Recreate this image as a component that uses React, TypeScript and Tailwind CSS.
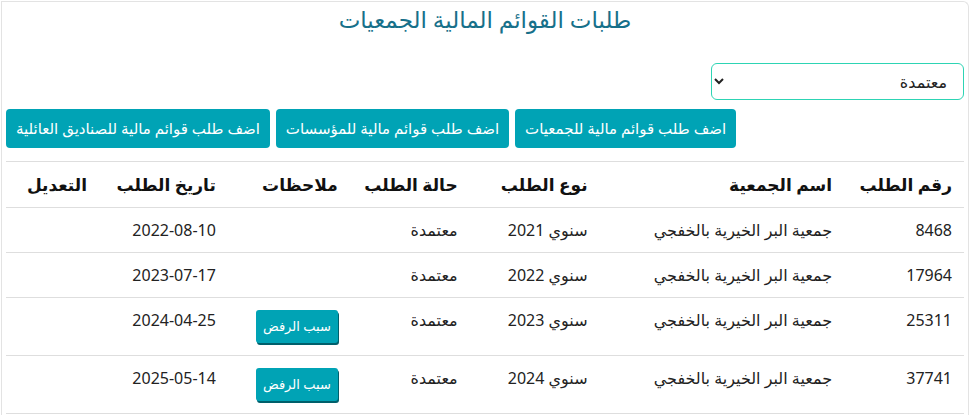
import React from 'react';

interface RequestRow {
  id: number;
  org: string;
  type: string;
  status: string;
  hasReject: boolean;
  date: string;
}

const rows: RequestRow[] = [
  { id: 8468, org: 'جمعية البر الخيرية بالخفجي', type: 'سنوي 2021', status: 'معتمدة', hasReject: false, date: '2022-08-10' },
  { id: 17964, org: 'جمعية البر الخيرية بالخفجي', type: 'سنوي 2022', status: 'معتمدة', hasReject: false, date: '2023-07-17' },
  { id: 25311, org: 'جمعية البر الخيرية بالخفجي', type: 'سنوي 2023', status: 'معتمدة', hasReject: true, date: '2024-04-25' },
  { id: 37741, org: 'جمعية البر الخيرية بالخفجي', type: 'سنوي 2024', status: 'معتمدة', hasReject: true, date: '2025-05-14' },
];

const addButtons = [
  'اضف طلب قوائم مالية للجمعيات',
  'اضف طلب قوائم مالية للمؤسسات',
  'اضف طلب قوائم مالية للصناديق العائلية',
];

const headers = ['رقم الطلب', 'اسم الجمعية', 'نوع الطلب', 'حالة الطلب', 'ملاحظات', 'تاريخ الطلب', 'التعديل'];
const colWidths = ['w-[120px]', 'w-[245px]', 'w-[130px]', 'w-[120px]', 'w-[122px]', 'w-[129px]', 'w-[93px]'];

const App: React.FC = () => {
  return (
    <div dir="rtl" className="min-h-screen bg-white pt-px" style={{ fontFamily: '"Noto Sans", "DejaVu Sans", sans-serif' }}>
      <div className="ml-px mr-px border-t border-l border-r border-[#e3e3e3] rounded-tr-md px-[4px] pb-4">
        {/* title */}
        <h1 className="text-center text-[23px] leading-[34px] text-[#17708a]">طلبات القوائم المالية الجمعيات</h1>

        {/* status filter */}
        <div className="mt-[27px] flex">
          <select
            defaultValue="معتمدة"
            className="w-[253px] h-[37px] rounded-md border border-[#2dd4b4] bg-white px-3 text-[16px] text-[#222] outline-none"
          >
            <option>معتمدة</option>
            <option>مرفوضة</option>
            <option>قيد المراجعة</option>
          </select>
        </div>

        {/* add buttons */}
        <div className="mt-[9px] flex justify-end gap-[6px]">
          {addButtons.map((label) => (
            <button key={label} className="h-[39px] px-[10px] rounded bg-[#00a3b5] text-white text-[15px] whitespace-nowrap">
              {label}
            </button>
          ))}
        </div>

        {/* requests table */}
        <table className="mt-[13px] w-full border-collapse text-right">
          <thead>
            <tr className="border-t border-b border-[#dedede]">
              {headers.map((h, i) => (
                <th key={h} className={`${colWidths[i]} px-3 h-[46px] align-middle text-[17px] font-bold text-[#111]`}>
                  {h}
                </th>
              ))}
            </tr>
          </thead>
          <tbody>
            {rows.map((row) => (
              <tr key={row.id} className="border-b border-[#dedede] text-[16px] leading-[22px] text-[#222]">
                <td className="px-3 py-[11px] align-top">{row.id}</td>
                <td className="px-3 py-[11px] align-top">{row.org}</td>
                <td className="px-3 py-[11px] align-top">{row.type}</td>
                <td className="px-3 py-[11px] align-top">{row.status}</td>
                <td className="px-3 py-[12px] align-top">
                  {row.hasReject && (
                    <button className="h-[33px] px-[7px] rounded-[3px] bg-[#00a3b5] text-white text-[13px] leading-none shadow-[1px_2px_0_#005f6b]">
                      سبب الرفض
                    </button>
                  )}
                </td>
                <td className="px-3 py-[11px] align-top">{row.date}</td>
                <td className="px-3 py-[11px] align-top"></td>
              </tr>
            ))}
          </tbody>
        </table>
      </div>
    </div>
  );
};

export default App;
